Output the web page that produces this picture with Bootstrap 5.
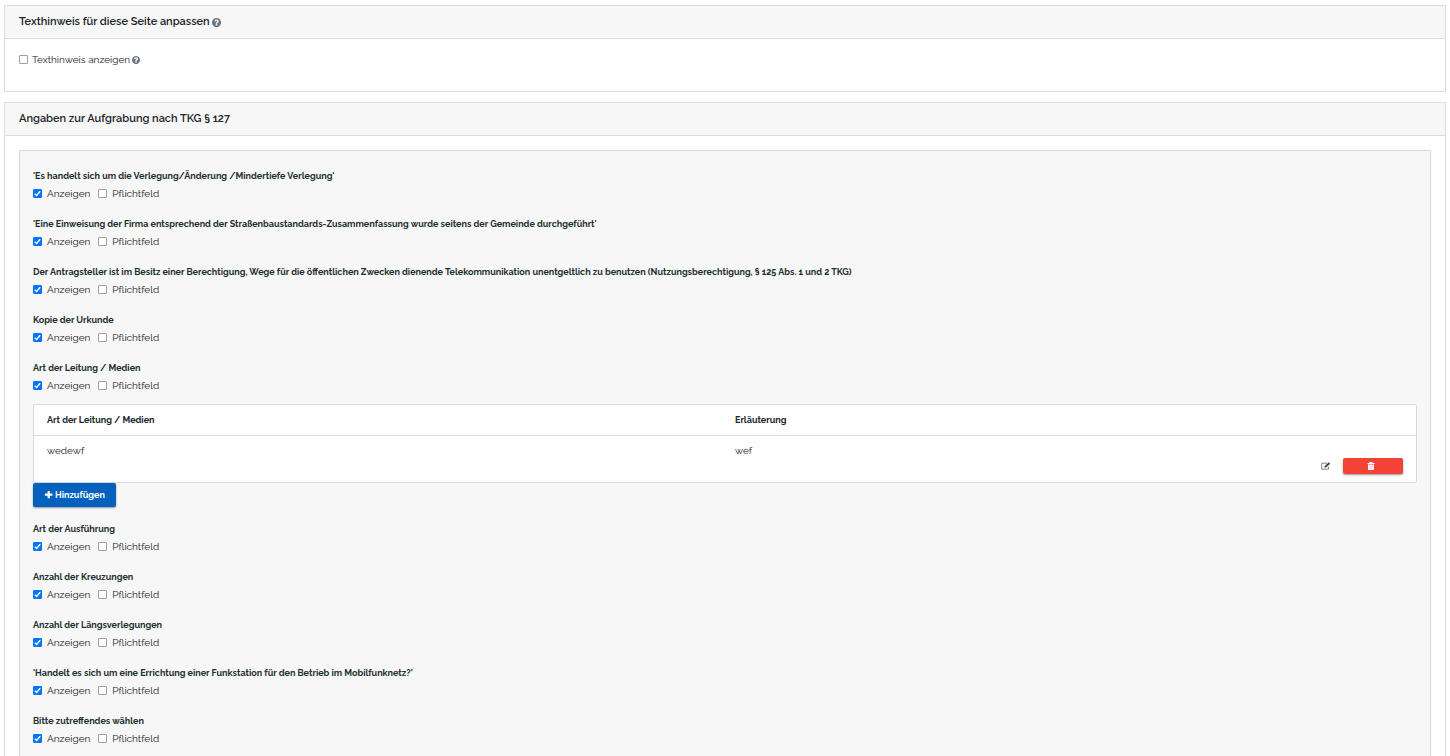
<!DOCTYPE html>
<html lang="de">
<head>
<meta charset="utf-8">
<meta name="viewport" content="width=device-width, initial-scale=1">
<title>Angaben zur Aufgrabung</title>
<link href="https://cdn.jsdelivr.net/npm/bootstrap@5.3.0/dist/css/bootstrap.min.css" rel="stylesheet">
<style>
  body { font-family: Raleway, Lato, "Open Sans", sans-serif; font-size: 10px; line-height: 16px; color: #212529; background: #fff; }
  .page { padding: 5px 4px 0; }
  .panel { border: 1px solid #dcdde0; border-radius: 0; margin-bottom: 10px; }
  .panel > .card-header { background: #f7f7f7; border-bottom: 1px solid #dcdde0; border-radius: 0; padding: 8px 14px; }
  .panel h2 { font-size: 11px; line-height: 16px; font-weight: 600; color: #212529; }
  .panel > .card-body { padding: 14px; }
  .panel > .hint-body { min-height: 52px; padding-top: 13px; }
  .help { fill: #6c757d; }
  .with-help { gap: 2px; }
  .fields { background: #f7f7f7; border: 1px solid #d8d9da; padding: 17px 13px; }
  .field { margin: 0 0 15px; min-width: 0; }
  .field legend { font-size: 9px; line-height: 16px; font-weight: 700; color: #1c3030; margin-bottom: 3px; }
  .options { gap: 8px; line-height: 14px; }
  .option { gap: 5px; }
  .hint { gap: 4px; }
  input[type=checkbox] { appearance: none; width: 9px; height: 9px; margin: 0 0 1px; background: #fff; border: 1px solid #a0a0a0; border-radius: 1px; }
  input[type=checkbox]:checked { border-color: #0075ff; background: #0075ff url("data:image/svg+xml,%3Csvg xmlns='http://www.w3.org/2000/svg' viewBox='0 0 7 7'%3E%3Cpath d='M.8 3.700l1.800 1.800L6.200 1.200' fill='none' stroke='%23fff' stroke-width='1.400'/%3E%3C/svg%3E") center/7px no-repeat; }
  .media { background: #fff; border: 1px solid #d8d9da; border-radius: 2px; margin-top: -4px; }
  .media table { table-layout: fixed; font-size: 10px; color: #212529; }
  .media th { padding: 7px 13px; font-size: 9px; font-weight: 700; color: #212529; border-bottom: 1px solid #d8d9da; }
  .media th:first-child { width: 50%; }
  .media td { padding: 7px 13px; height: 46px; vertical-align: top; }
  .media th + th, .media td + td { padding-left: 10px; }
  .row-tools { gap: 12px; margin-top: 15px; }
  .tool-edit { border: 0; background: none; width: 10px; height: 16px; color: #444; }
  .tool-delete { width: 60px; height: 16px; background: #f44336; border-radius: 2px; box-shadow: 0 1px 2px rgba(0,0,0,.4); padding: 0 4px 0 0; }
  .btn-add { display: flex; align-items: center; gap: 2px; height: 24px; padding: 0 11px; font-size: 9px; font-weight: 700; line-height: 16px; color: #fff; background: #0461bd; border: 0; border-radius: 2px; box-shadow: 0 1px 2px rgba(0,0,0,.4); margin-bottom: 14px; }
  .btn-add:hover { color: #fff; background: #0454a3; }
</style>
</head>
<body>
<svg class="d-none" aria-hidden="true">
  <symbol id="i-help" viewBox="0 0 1536 1536"><path d="M896 1248v-192q0-14-9-23t-23-9H672q-14 0-23 9t-9 23v192q0 14 9 23t23 9h192q14 0 23-9t9-23zm256-672q0-88-55.500-163T958 297t-170-41q-243 0-371 213-15 24 8 42l132 100q7 6 19 6 16 0 25-12 53-68 86-92 34-24 86-24 48 0 85.500 26t37.500 59q0 38-20 61t-68 45q-63 28-115.500 86.500T640 892v36q0 14 9 23t23 9h192q14 0 23-9t9-23q0-19 21.500-49.500T972 829q32-18 49-28.500t46-35 44.500-48 28-60.500 12.500-81zm384 192q0 209-103 385.500T1153.500 1433 768 1536t-385.500-103T103 1153.500 0 768t103-385.500T382.500 103 768 0t385.500 103T1433 382.500 1536 768z"/></symbol>
  <symbol id="i-plus" viewBox="0 0 10 10"><path d="M4 1h2.400v2.900h3v2.400h-3v2.900H4V6.300H1V3.900h3z"/></symbol>
  <symbol id="i-edit" viewBox="0 0 20 16"><path d="M15 9.500v4.800H1.500v-12H12" fill="none" stroke="currentColor" stroke-width="1.300"/><path d="M7 11V8.500l8.500-8L18.500 3.300 10 11z" fill="currentColor"/></symbol>
  <symbol id="i-trash" viewBox="0 0 16 16"><path d="M5.500 0h5l1 2H15v2H1V2h3.500zM2 5h12v9.500L12.500 16h-9L2 14.500z"/><path d="M5.500 7v6.500M8 7v6.500M10.500 7v6.500" stroke="#f44336" stroke-width=".5"/></symbol>
</svg>
<main class="page container-fluid">
  <section class="card panel">
    <div class="card-header"><h2 class="with-help mb-0 d-flex align-items-center">Texthinweis für diese Seite anpassen <svg class="help" width="9" height="9"><use href="#i-help"/></svg></h2></div>
    <div class="card-body hint-body">
      <label class="option hint d-flex align-items-center" for="hint"><input type="checkbox" id="hint"><span class="with-help d-flex align-items-center">Texthinweis anzeigen<svg class="help" width="8" height="8"><use href="#i-help"/></svg></span></label>
    </div>
  </section>

  <section class="card panel">
    <div class="card-header"><h2 class="mb-0">Angaben zur Aufgrabung nach TKG § 127</h2></div>
    <div class="card-body">
      <form class="fields">
        <fieldset class="field"><legend>'Es handelt sich um die Verlegung/Änderung /Mindertiefe Verlegung'</legend>
          <div class="options d-flex"><label class="option d-flex align-items-center"><input type="checkbox" checked>Anzeigen</label><label class="option d-flex align-items-center"><input type="checkbox">Pflichtfeld</label></div></fieldset>
        <fieldset class="field"><legend>'Eine Einweisung der Firma entsprechend der Straßenbaustandards-Zusammenfassung wurde seitens der Gemeinde durchgeführt'</legend>
          <div class="options d-flex"><label class="option d-flex align-items-center"><input type="checkbox" checked>Anzeigen</label><label class="option d-flex align-items-center"><input type="checkbox">Pflichtfeld</label></div></fieldset>
        <fieldset class="field"><legend>Der Antragsteller ist im Besitz einer Berechtigung, Wege für die öffentlichen Zwecken dienende Telekommunikation unentgeltlich zu benutzen (Nutzungsberechtigung, § 125 Abs. 1 und 2 TKG)</legend>
          <div class="options d-flex"><label class="option d-flex align-items-center"><input type="checkbox" checked>Anzeigen</label><label class="option d-flex align-items-center"><input type="checkbox">Pflichtfeld</label></div></fieldset>
        <fieldset class="field"><legend>Kopie der Urkunde</legend>
          <div class="options d-flex"><label class="option d-flex align-items-center"><input type="checkbox" checked>Anzeigen</label><label class="option d-flex align-items-center"><input type="checkbox">Pflichtfeld</label></div></fieldset>
        <fieldset class="field"><legend>Art der Leitung / Medien</legend>
          <div class="options d-flex"><label class="option d-flex align-items-center"><input type="checkbox" checked>Anzeigen</label><label class="option d-flex align-items-center"><input type="checkbox">Pflichtfeld</label></div></fieldset>

        <div class="media">
          <table class="w-100">
            <thead><tr><th scope="col">Art der Leitung / Medien</th><th scope="col">Erläuterung</th></tr></thead>
            <tbody><tr><td>wedewf</td><td>
              <div class="d-flex justify-content-between"><span>wef</span>
                <div class="row-tools d-flex align-items-center">
                  <button type="button" class="tool-edit d-flex align-items-center justify-content-center p-0" aria-label="Bearbeiten"><svg class="flex-shrink-0" width="10" height="8"><use href="#i-edit"/></svg></button>
                  <button type="button" class="btn tool-delete d-flex align-items-center justify-content-center border-0" aria-label="Löschen"><svg width="8" height="8" fill="#fff"><use href="#i-trash"/></svg></button>
                </div></div>
            </td></tr></tbody>
          </table>
        </div>
        <button type="button" class="btn btn-add"><svg width="9" height="9" fill="#fff"><use href="#i-plus"/></svg>Hinzufügen</button>

        <fieldset class="field"><legend>Art der Ausführung</legend>
          <div class="options d-flex"><label class="option d-flex align-items-center"><input type="checkbox" checked>Anzeigen</label><label class="option d-flex align-items-center"><input type="checkbox">Pflichtfeld</label></div></fieldset>
        <fieldset class="field"><legend>Anzahl der Kreuzungen</legend>
          <div class="options d-flex"><label class="option d-flex align-items-center"><input type="checkbox" checked>Anzeigen</label><label class="option d-flex align-items-center"><input type="checkbox">Pflichtfeld</label></div></fieldset>
        <fieldset class="field"><legend>Anzahl der Längsverlegungen</legend>
          <div class="options d-flex"><label class="option d-flex align-items-center"><input type="checkbox" checked>Anzeigen</label><label class="option d-flex align-items-center"><input type="checkbox">Pflichtfeld</label></div></fieldset>
        <fieldset class="field"><legend>'Handelt es sich um eine Errichtung einer Funkstation für den Betrieb im Mobilfunknetz?'</legend>
          <div class="options d-flex"><label class="option d-flex align-items-center"><input type="checkbox" checked>Anzeigen</label><label class="option d-flex align-items-center"><input type="checkbox">Pflichtfeld</label></div></fieldset>
        <fieldset class="field"><legend>Bitte zutreffendes wählen</legend>
          <div class="options d-flex"><label class="option d-flex align-items-center"><input type="checkbox" checked>Anzeigen</label><label class="option d-flex align-items-center"><input type="checkbox">Pflichtfeld</label></div></fieldset>
      </form>
    </div>
  </section>
</main>
<script src="https://cdn.jsdelivr.net/npm/bootstrap@5.3.0/dist/js/bootstrap.bundle.min.js"></script>
</body>
</html>
